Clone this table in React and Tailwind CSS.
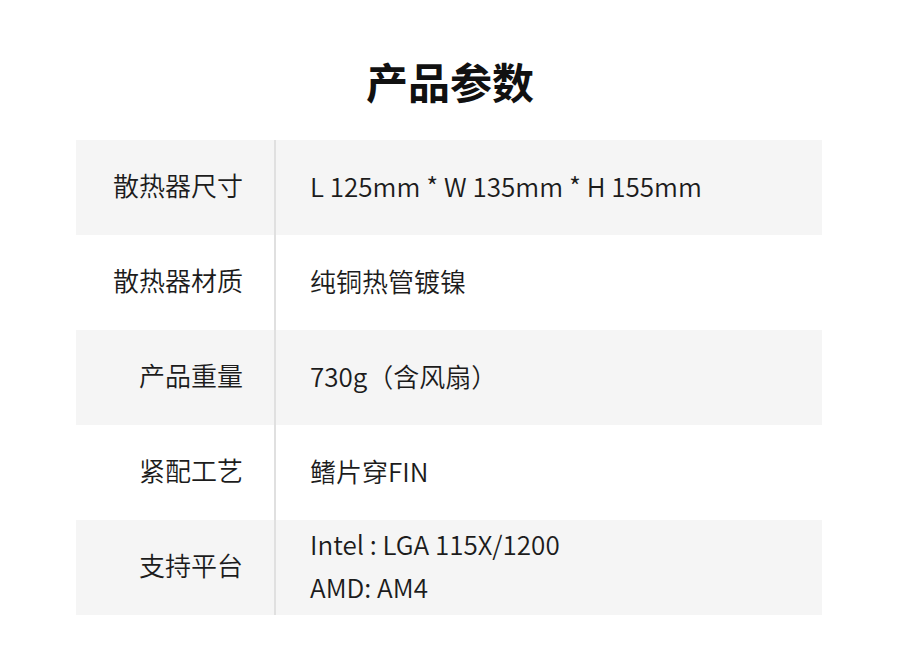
import React from "react";

const rows = [
    { label: "散热器尺寸", value: ["L 125mm * W 135mm * H 155mm"] },
    { label: "散热器材质", value: ["纯铜热管镀镍"] },
    { label: "产品重量", value: ["730g（含风扇）"] },
    { label: "紧配工艺", value: ["鳍片穿FIN"] },
    { label: "支持平台", value: ["Intel : LGA 115X/1200", "AMD: AM4"] },
];

const App = () => {
    return (
        <div
            className="w-[900px] h-[654px] bg-white text-[#1c1c1c]"
            style={{ fontFamily: '"Noto Sans CJK SC", "Noto Sans", sans-serif' }}
        >
            <div className="h-[140px] pt-[58px] text-center">
                <h1 className="text-[42px] leading-[46px] font-bold text-[#111]">产品参数</h1>
            </div>
            <div className="mx-[76px] w-[746px] font-[350]">
                {rows.map((row, i) => (
                    <div
                        key={row.label}
                        className={`flex h-[95px] ${i % 2 === 0 ? "bg-[#f5f5f5]" : "bg-white"}`}
                    >
                        <div className="w-[198px] flex items-center justify-end pr-[31px] pb-[5px] text-[26px] leading-[30px]">
                            {row.label}
                        </div>
                        <div className="w-[2px] bg-[#e0e0e0]"></div>
                        <div className="flex-1 flex flex-col justify-center pl-[34px] pb-[5px] text-[26px] leading-[43px]">
                            {row.value.map((v) => (
                                <div key={v}>{v}</div>
                            ))}
                        </div>
                    </div>
                ))}
            </div>
        </div>
    );
};

export default App;
